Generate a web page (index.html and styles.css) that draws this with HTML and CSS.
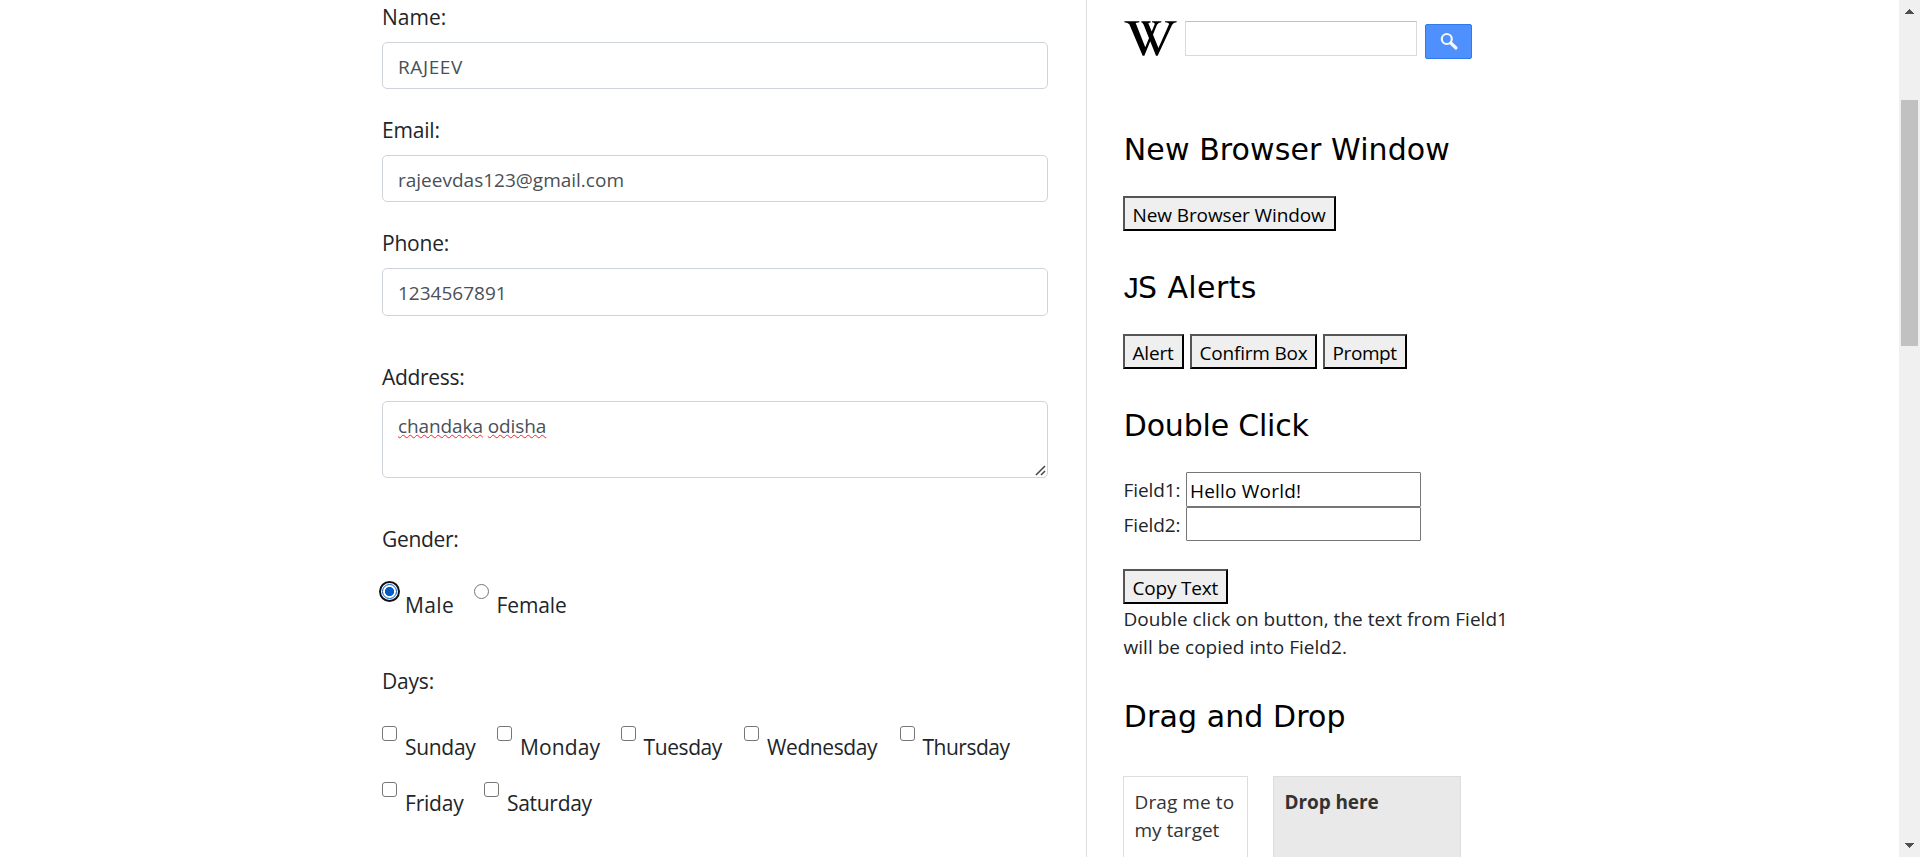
FILE: index.html
```html
<!DOCTYPE html>
<html lang="en">
<head>
<meta charset="utf-8">
<title>Form</title>
<link rel="stylesheet" href="styles.css">
</head>
<body>
<main class="form">
  <label class="label">Name:</label>
  <div class="control name"><span class="w6">RAJEEV</span></div>
  <label class="label email-label n2">Email:</label>
  <div class="control email">rajeevdas123@gmail.com</div>
  <label class="label phone-label n2">Phone:</label>
  <div class="control phone">1234567891</div>
  <label class="label address-label n3">Address:</label>
  <div class="textarea n1"><span class="typo">chandaka</span> <span class="typo">odisha</span>
    <svg class="grip" width="11" height="11" viewBox="0 0 11 11"><path d="M1 10L10 1M6 10L10 6" fill="none" stroke="#444" stroke-width="1.5"/></svg>
  </div>
  <label class="label gender-label n3">Gender:</label>
  <div class="choices radios">
    <label class="choice"><i class="radio checked"></i><span class="w4">Male</span></label>
    <label class="choice"><i class="radio"></i><span class="n1">Female</span></label>
  </div>
  <label class="label days-label n2">Days:</label>
  <div class="choices days">
    <label class="choice"><i class="box"></i><span class="n3">Sunday</span></label>
    <label class="choice"><i class="box"></i><span class="w1">Monday</span></label>
    <label class="choice"><i class="box"></i><span class="n4">Tuesday</span></label>
    <label class="choice"><i class="box"></i><span class="n4">Wednesday</span></label>
    <label class="choice"><i class="box"></i><span class="n5">Thursday</span></label>
  </div>
  <div class="choices days-end">
    <label class="choice"><i class="box"></i><span class="n2">Friday</span></label>
    <label class="choice"><i class="box"></i><span class="n3">Saturday</span></label>
  </div>
</main>
<aside class="side">
  <div class="search">
    <svg class="logo" width="53" height="35" viewBox="26 33 159 105">
      <path d="M27 34H72V37L61 39L91 115L86 137H82L42 43Q38 38 27 37ZM78 34H106V37L99 40L129 113L125 137H122L85 44Q82 38 78 37ZM110 34H138V37Q129 38 125 44L87 137H83L84 126L118 43Q119 38 110 37ZM149 34H184V37Q174 38 170 45L127 137H123L124 126L161 43Q162 38 149 37Z" fill="#000"/>
    </svg>
    <div class="search-input"></div>
    <div class="search-button">
      <svg width="19" height="19" viewBox="0 0 19 19"><circle cx="6.8" cy="7" r="5" fill="none" stroke="#fff" stroke-opacity=".93" stroke-width="2.2"/><path d="M10.8 11L16 16" stroke="#fff" stroke-opacity=".93" stroke-width="3.2" stroke-linecap="round"/></svg>
    </div>
  </div>
  <h2 class="title w1">New Browser Window</h2>
  <div class="buttons"><div class="btn new-window n1">New Browser Window</div></div>
  <h2 class="title w4"><span class="hook">J</span>S Alerts</h2>
  <div class="buttons">
    <div class="btn alert n2">Alert</div>
    <div class="btn confirm n2">Confirm Box</div>
    <div class="btn prompt n4">Prompt</div>
  </div>
  <h2 class="title n2">Double Click</h2>
  <div class="field first"><span class="n1">Field1:</span><div class="field-input w2">Hello World!</div></div>
  <div class="field"><span class="n1">Field2:</span><div class="field-input"></div></div>
  <div class="buttons"><div class="btn copy n2">Copy Text</div></div>
  <p class="note">Double click on button, the text from Field1<br>will be copied into Field2.</p>
  <h2 class="title drag-title w1">Drag and Drop</h2>
  <div class="dnd">
    <div class="drag"><span class="w1">Drag me to</span><br>my target</div>
    <div class="drop n1">Drop here</div>
  </div>
</aside>
<div class="scrollbar">
  <svg class="up" width="9" height="5" viewBox="0 0 9 5"><path d="M4 0H5V1H6V2H7V3H8V4H9V5H0V4H1V3H2V2H3V1H4Z" fill="#505050"/></svg>
  <div class="thumb"></div>
  <svg class="down" width="9" height="5" viewBox="0 0 9 5"><path d="M0 0H9V1H8V2H7V3H6V4H5V5H4V4H3V3H2V2H1V1H0Z" fill="#505050"/></svg>
</div>
</body>
</html>
```
FILE: styles.css
```css
* { box-sizing: border-box; }
body {
  margin: 0;
  height: 857px;
  overflow: hidden;
  display: flex;
  background: #fff;
  color: #212529;
  font: 19px/28px "Open Sans", "Noto Sans", sans-serif;
  white-space: nowrap;
}

/* Tracking steps */
.n1 { letter-spacing: -0.1px; }
.n2 { letter-spacing: -0.2px; }
.n3 { letter-spacing: -0.3px; }
.n4 { letter-spacing: -0.4px; }
.n5 { letter-spacing: -0.5px; }
.w1 { letter-spacing: 0.1px; }
.w2 { letter-spacing: 0.2px; }
.w4 { letter-spacing: 0.4px; }
.w6 { letter-spacing: 0.6px; }

/* Form column */
.form {
  width: 1087px;
  height: 857px;
  padding: 0 38px 0 382px;
  border-right: 1px solid #ddd;
}
.label { display: block; height: 34px; font-size: 21px; line-height: 34px; }
.control {
  height: 47px;
  padding-left: 15px;
  border: 1px solid #ced4da;
  border-radius: 5px;
  color: #495057;
  line-height: 48px;
}
.name { margin-top: 8px; }
.email-label { margin-top: 24px; }
.email { margin-top: 8px; }
.phone-label { margin-top: 24px; }
.phone { height: 48px; margin-top: 8px; }
.address-label { margin-top: 44px; }
.textarea {
  position: relative;
  height: 77px;
  margin-top: 7px;
  padding: 10px 0 0 15px;
  border: 1px solid #ced4da;
  border-radius: 5px;
  color: #495057;
}
.typo {
  text-decoration: underline wavy #f22 1.3px;
  text-decoration-skip-ink: none;
  text-underline-offset: 1px;
}
.grip { position: absolute; right: 1px; bottom: 1px; }
.gender-label { margin-top: 44px; }
.days-label { margin-top: 42px; }
.choices { display: grid; height: 34px; }
.radios { grid-template-columns: 91.5px 120px; margin-top: 32px; }
.days { grid-template-columns: 115px 123.5px 123.5px 155.5px 120px; margin-top: 32px; }
.days-end { grid-template-columns: 102px 120px; margin-top: 22px; }
.choice { display: flex; gap: 8px; font-size: 21px; line-height: 34px; }
.box, .radio {
  flex: none;
  width: 15px;
  height: 15px;
  margin-top: -4px;
  border: 1px solid #767676;
  border-radius: 3px;
}
.radio { border-radius: 50%; }
.checked {
  border-color: #005cc8;
  background: radial-gradient(circle, #005cc8 4.2px, #fff 5px);
  outline: 2px solid #101010;
  outline-offset: 1.5px;
}

/* Side column */
.side { flex: 1; padding: 21px 0 0 36px; }
.search { display: flex; height: 38px; }
.logo { flex: none; margin-left: 1px; }
.search-input {
  width: 232px;
  height: 35px;
  margin-left: 8px;
  border: 1px solid #d9d9d9;
  border-top-color: #c0c0c0;
}
.search-button {
  display: flex;
  width: 47px;
  height: 35px;
  margin: 3px 0 0 8px;
  padding: 7px 0 0 14px;
  border: 1px solid #2f7bed;
  border-radius: 2px;
  background: #4d90fe;
}
.title {
  height: 36px;
  margin: 39px 0 28px;
  padding-left: 0.8px;
  color: #000;
  font: 30px/36px "DejaVu Sans", sans-serif;
}
.search + .title { margin-top: 73px; }
.hook { margin-right: -1.2px; font-family: "Liberation Sans", sans-serif; }
.buttons { display: flex; gap: 6px; }
.btn {
  height: 35px;
  padding-left: 7.5px;
  border: 2px solid;
  border-color: #555 #000 #000 #555;
  background: #efefef;
  color: #000;
  line-height: 34px;
}
.new-window { width: 213px; }
.alert { width: 61px; }
.confirm { width: 127px; }
.prompt { width: 84px; }
.copy { width: 105px; }
.field { display: flex; height: 34px; line-height: 36px; }
.field.first { height: 35px; }
.field span { width: 63px; padding-left: 0.5px; }
.field-input {
  width: 235px;
  padding-left: 3px;
  border: 1px solid #767676;
  border-radius: 1px;
  color: #000;
}
.field + .buttons { margin-top: 28px; }
.note { margin: 1px 0 0; padding-left: 0.5px; letter-spacing: 0.03px; }
.drag-title { margin: 38px 0 41px; }
.dnd { display: flex; gap: 25px; color: #333; }
.drag, .drop { height: 120px; padding: 11px 10.5px; border: 1px solid #ddd; }
.drag { width: 125px; }
.drop { width: 188px; background: #e9e9e9; font-weight: 700; }

/* Page scrollbar */
.scrollbar {
  display: flex;
  flex-direction: column;
  align-items: center;
  width: 21px;
  height: 857px;
  padding: 9px 0;
  background: #f0f0f0;
}
.thumb { width: 17px; height: 246px; margin-top: 86px; background: #c1c1c1; }
.down { margin-top: auto; }
```
